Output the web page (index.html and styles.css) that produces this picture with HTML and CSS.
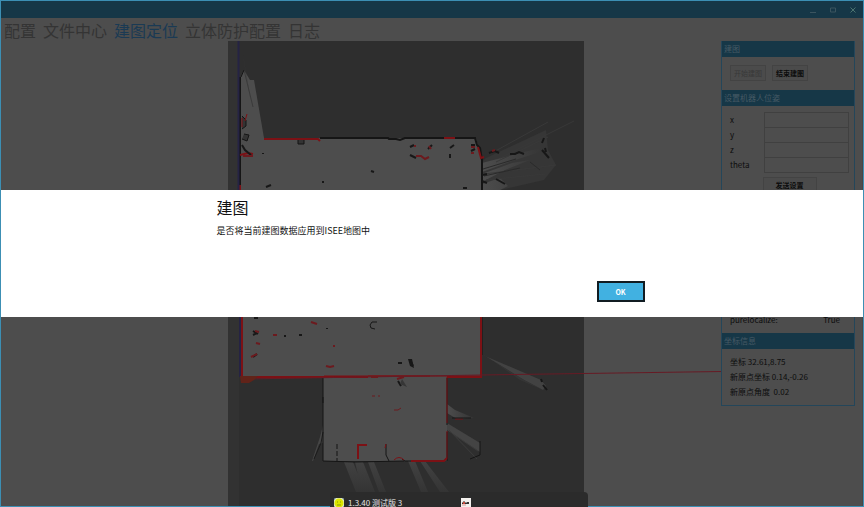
FILE: index.html
```html
<!DOCTYPE html>
<html lang="zh-CN">
<head>
<meta charset="utf-8">
<title>建图定位</title>
<link rel="stylesheet" href="styles.css">
</head>
<body>
<div class="window">
  <header class="titlebar">
    <button class="win-btn" aria-label="最小化"><svg width="8" height="8" viewBox="0 0 8 8"><path d="M1 6.500H7"/></svg></button>
    <button class="win-btn" aria-label="最大化"><svg width="8" height="8" viewBox="0 0 8 8"><path d="M1.500 2H6.500V6H1.500Z"/></svg></button>
    <button class="win-btn close" aria-label="关闭"><svg width="8" height="8" viewBox="0 0 8 8"><path d="M1.500 1.500L6.500 6.500M6.500 1.500L1.500 6.500"/></svg></button>
  </header>
  <nav class="tabs">
    <a href="#config">配置</a>
    <a href="#files">文件中心</a>
    <a href="#mapping" class="active">建图定位</a>
    <a href="#guard">立体防护配置</a>
    <a href="#log">日志</a>
  </nav>
  <main class="main">
    <div class="map">
      <svg viewBox="1 41 720 466" preserveAspectRatio="xMinYMin meet" aria-hidden="true">
        <defs>
          <linearGradient id="fan" x1="0" y1="0" x2="1" y2="0"><stop offset="0" stop-color="#4d4d4d"/><stop offset="1" stop-color="#343434"/></linearGradient>
          <linearGradient id="ray" x1="0" y1="0" x2="0" y2="1"><stop offset="0" stop-color="#424242"/><stop offset="1" stop-color="#343434"/></linearGradient>
        </defs>
        <rect x="228" y="41" width="356" height="466" fill="#2e2e2e"/>
        <rect x="228" y="41" width="11" height="466" fill="#323232"/>
        <!-- scanned floor -->
        <path fill="#4d4d4d" d="M240 78L244 70L250 80H254L264 138H476L480 153H482V377H447V461H323V377H240Z"/>
        <path fill="#393939" d="M242 50L251 103L246 72Z"/>
        <path fill="none" stroke="#3a3a3a" d="M244 70L253 107"/>
        <!-- scan fans on the right -->
        <path fill="#363636" d="M486 158L546 130L548 150L556 165L544 180L500 190H482V162Z"/>
        <path fill="url(#fan)" d="M482 163L520 153L546 147L540 152L512 161L482 172ZM482 174L512 163L530 160L505 170L482 182ZM482 184L500 178L508 186L500 190H482Z"/>
        <g fill="none" stroke="#393939">
          <path d="M490 154L548 122M500 158L574 121M496 162L548 137M484 174L556 165M486 180L545 174"/>
          <path stroke="#2a2a2a" d="M483 169L516 159M484 176L520 168M530 162L540 170"/>
        </g>
        <path fill="#424242" d="M482 354L485 356L541 380L546 386L543 390L524 380Z"/>
        <path fill="#353535" d="M493 361L524 380L543 390L520 380Z"/>
        <path fill="url(#fan)" d="M447 404L455 410L474 418L457 419L447 413Z"/>
        <path fill="#444" d="M447 423L480 443V452L462 440L447 430Z"/>
        <path fill="none" stroke="#3c3c3c" d="M449 430L477 459M453 434L478 451"/>
        <!-- scan rays below -->
        <path fill="url(#ray)" d="M344 462H353L365 492H356ZM355 462H363L375 492H362ZM368 462H374L386 492H379ZM408 461H415L428 492H421ZM420 461H425L449 492H440Z"/>
        <path fill="#464646" d="M323 425V443L319 444L313 461H312L320 437Z"/>
        <path fill="none" stroke="#1c1c1c" d="M323 432L321 443L314 459"/>
        <!-- walls -->
        <g fill="none" stroke="#151515">
          <path stroke-width="2" d="M320 138H388L389 139L396 139L400 140L405 138H475L477 145L480 148L482 160V190M240 77V190M241 317V377"/>
          <path d="M241 77L244 70M323 378V461M323 461L355 462L404 461M447 378V425M447 432V461M482 317V355M480 441V455L470 459"/>
          <path fill="#333" d="M298 139H304V144H298ZM242 116L246 120V126L242 129M244 134L249 135L247 141L242 139"/>
          <path d="M402 459L405 461H442M386 444V455L389 461M323 397V403"/>
          <path stroke-dasharray="5 2" d="M337 444V461"/>
        </g>
        <g fill="none" stroke="#7c1115" stroke-width="1">
          <path stroke-width="2" d="M264 139H318L320 141M444 138H455M478 147L481 158L484 157M240 155L248 153L253 154M240 185V190"/>
          <path stroke-width="2" d="M242 317V377H368M481 317V377H447M358 459V445H367M411 461H444L447 458"/>
          <path d="M447 377V423M447 431V458M368 376H430M324 376H480M242 118V127M247 114L245 121M455 419H463M386 444L385 448M394 460Q399 455 404 460"/>
          <path stroke="#671b25" d="M245 379L481 375L721 371.500"/>
        </g>
        <path stroke="#252344" stroke-width="2" d="M238.500 41V190M240 317V377"/>
        <path fill="#612319" d="M240 376H258L254 380L249 383H241Z"/>
        <!-- obstacles -->
        <g fill="none" stroke="#171717" stroke-width="2">
          <path d="M410 147L414 145M410 155L416 158M428 149L432 145M450 148L454 145M450 154V158M471 145H475M471 151L475 149M489 153L495 151L499 153M510 154H515L519 152L524 154M542 143L544 138M542 150L549 158M545 148L546 152M482 175L487 174M482 181L487 183M496 179L505 184M371 171L374 172M266 187L271 185M463 188H467M242 145L245 150L251 155"/>
          <path d="M253 331L258 334M253 335L257 333M253 357L257 354M254 318H258M299 335H302M398 363H402M410 360L413 366M541 379L542 382M543 385L547 390M398 381L401 386"/>
          <path stroke-width="1" d="M377 322H372L370 325L371 328L375 329M452 418H471"/>
        </g>
        <path fill="#171717" d="M408 359L412 359L414 368L410 366ZM284 335H286V337H284ZM326 328H328V329H326ZM262 153H264V154H262ZM322 181H324V183H322Z"/>
        <g fill="none" stroke="#6c1a1e" stroke-width="2">
          <path d="M416 156H421L425 159L429 157M471 147H475M471 153H474M414 146H416M429 146L431 149M492 151L495 150M243 156H253"/>
          <path d="M255 331L259 332M256 343L260 344M251 357L257 354M311 322L317 324M273 335H277M333 346H335M326 366L330 367L334 366M371 377H378M397 379L404 377"/>
          <path stroke-width="1" d="M372 396H375M378 396H380M394 410H398L401 408"/>
        </g>
        <path fill="#363636" d="M402 379L407 387L400 384Z"/>
      </svg>
    </div>
    <aside class="side">
      <section class="group">
        <h2>建图</h2>
        <div class="actions">
          <button class="btn" disabled>开始建图</button>
          <button class="btn">结束建图</button>
        </div>
      </section>
      <section class="group">
        <h2>设置机器人位姿</h2>
        <form class="pose">
          <label for="px">x</label><input id="px" type="text">
          <label for="py">y</label><input id="py" type="text">
          <label for="pz">z</label><input id="pz" type="text">
          <label for="pt">theta</label><input id="pt" type="text">
          <button class="btn send" type="button">发送设置</button>
        </form>
        <div class="status"><span>purelocalize:</span><span>True</span></div>
      </section>
      <section class="group">
        <h2>坐标信息</h2>
        <div class="coords">
          <p>坐标 32.61,8.75</p>
          <p>新原点坐标 0.14,-0.26</p>
          <p>新原点角度&nbsp; 0.02</p>
        </div>
      </section>
    </aside>
  </main>
</div>

<div class="overlay">
  <section class="dialog" role="dialog" aria-labelledby="dlg-title">
    <div class="dialog-body">
      <h1 id="dlg-title">建图</h1>
      <p>是否将当前建图数据应用到ISEE地图中</p>
      <button class="ok">OK</button>
    </div>
  </section>
</div>

<div class="taskbar">
  <div class="task">
    <svg width="10" height="10" viewBox="0 0 10 10" aria-hidden="true"><rect width="10" height="10" fill="#dfe8b8"/><circle cx="5" cy="5" r="4.500" fill="#dce600"/><path d="M0 0H2L0 2ZM8 0H10V2ZM0 8L2 10H0ZM10 8V10H8Z" fill="#58738a"/><path d="M3 4H4M6 4H7M3 7H7" stroke="#8b9b00"/></svg>
    <span>1.3.40 测试版 3</span>
  </div>
  <div class="task">
    <svg width="10" height="10" viewBox="0 0 10 10" aria-hidden="true"><rect width="10" height="10" fill="#f4f1ee"/><path d="M1 5L3 3L5 5L6 4H8V6H1Z" fill="#333"/><path d="M2 4H4V6H2Z" fill="#c94b3c"/><path d="M1 7H5" stroke="#d99"/></svg>
  </div>
</div>
</body>
</html>
```
FILE: styles.css
```css
* {
  box-sizing: border-box;
}

html,
body {
  height: 100%;
  margin: 0;
}

body {
  position: relative;
  overflow: hidden;
  background: #4d4d4d;
  color: #0c0c0c;
  font: 8px/15px "Noto Sans CJK SC", "Open Sans", sans-serif;
}

h1,
h2,
p {
  margin: 0;
  font-weight: 400;
}

button,
input {
  font: inherit;
  color: inherit;
}

.window {
  display: flex;
  flex-direction: column;
  height: 100%;
  border: 1px solid #3c8fb4;
  overflow: hidden;
}

.titlebar {
  display: flex;
  flex: none;
  justify-content: flex-end;
  align-items: center;
  gap: 12px;
  height: 17px;
  padding-right: 6px;
  background: #163747;
}

.win-btn {
  display: flex;
  padding: 0;
  border: 0;
  background: none;
}

.win-btn svg {
  fill: none;
  stroke: #3b545f;
}

.close svg {
  stroke: #4c7470;
}

.tabs {
  display: flex;
  flex: none;
  gap: 7px;
  height: 23px;
  padding-left: 3px;
  font-size: 16px;
  line-height: 25px;
}

.tabs a {
  color: #343434;
  text-decoration: none;
  white-space: nowrap;
}

.tabs .active {
  color: #1a3a54;
}

.main {
  display: flex;
  flex: 1;
  min-height: 0;
}

.map {
  flex: 1;
  min-width: 0;
}

.map svg {
  display: block;
  width: 100%;
}

.side {
  flex: none;
  width: 142px;
  padding-right: 7px;
  border-right: 1px solid #464646;
}

.group {
  border: 1px solid #24465a;
  border-top: 0;
}

.group + .group {
  margin-top: -1px;
}

.group h2 {
  height: 16px;
  padding-left: 2px;
  background: #163747;
  color: #465a65;
  font-size: 8px;
  line-height: 16px;
}

.actions {
  display: flex;
  gap: 6px;
  padding: 8px 8px 9px;
}

.btn {
  width: 36px;
  height: 16px;
  padding: 0;
  border: 1px solid #434343;
  background: #4b4b4b;
  color: #0c0c0c;
  font-size: 7px;
  font-weight: 700;
  line-height: 14px;
  white-space: nowrap;
}

.btn:disabled {
  color: #383838;
  font-weight: 400;
}

.pose {
  display: grid;
  grid-template-columns: 34px 1fr;
  padding: 6px 5px 0 8px;
}

.pose input {
  width: 100%;
  min-width: 0;
  height: 16px;
  margin-bottom: -1px;
  padding: 0 2px;
  border: 1px solid #404040;
  background: #4d4d4d;
}

.pose .send {
  grid-column: 1 / -1;
  justify-self: center;
  width: 54px;
  margin-top: 5px;
}

.status {
  display: flex;
  justify-content: space-between;
  margin-top: 119px;
  padding: 0 14px 6px 8px;
}

.coords {
  padding: 5px 8px 6px;
}

.overlay {
  position: absolute;
  inset: 0 1px;
  display: flex;
  align-items: center;
}

.dialog {
  width: 100%;
  padding: 2px 25% 15px;
  background: #fff;
  color: #111;
}

.dialog-body {
  display: flex;
  flex-direction: column;
}

.dialog h1 {
  font-size: 16px;
  line-height: 30px;
}

.dialog p {
  font-size: 9px;
  line-height: 18px;
}

.ok {
  align-self: flex-end;
  width: 48px;
  height: 21px;
  margin: 41px 3px 0 0;
  padding: 0;
  border: 2px solid #111c22;
  background: #41b1e1;
  color: #fff;
  font-size: 7px;
  font-weight: 700;
  line-height: 16px;
}

.taskbar {
  position: absolute;
  left: 330px;
  bottom: 0;
  display: grid;
  grid-template-columns: 1fr 1fr;
  width: 258px;
  height: 15px;
  padding: 6px 0 0 4px;
  border-radius: 4px 4px 0 0;
  background: #2b2b2b;
  color: #e4e4e4;
}

.task {
  display: flex;
  gap: 4px;
  line-height: 9px;
}
```
